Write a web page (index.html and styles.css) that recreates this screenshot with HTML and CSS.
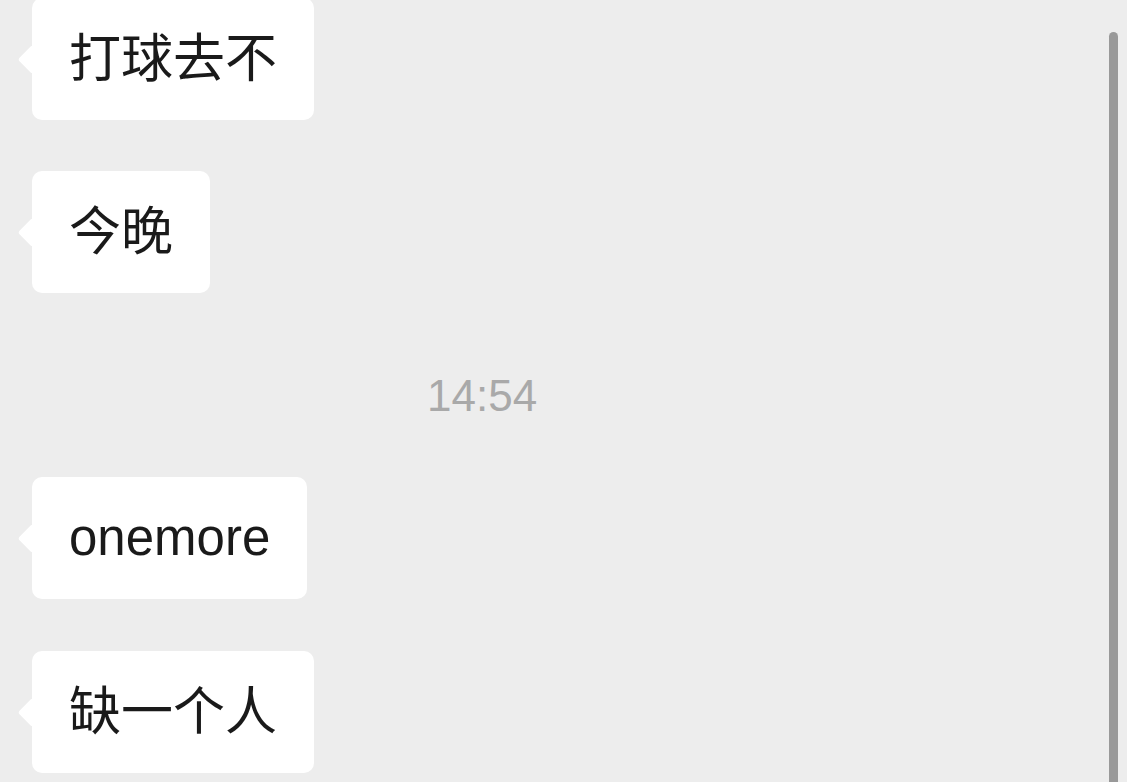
FILE: index.html
```html
<!DOCTYPE html>
<html lang="zh-CN">
<head>
  <meta charset="UTF-8">
  <meta name="viewport" content="width=device-width, initial-scale=1.0">
  <title>聊天</title>
  <link rel="stylesheet" href="styles.css">
</head>
<body>
  <div class="chat">
    <!-- 消息列表 -->
    <div class="row"><div class="bubble">打球去不</div></div>
    <div class="row"><div class="bubble">今晚</div></div>
    <div class="time">14:54</div>
    <div class="row row-wide"><div class="bubble latin">onemore</div></div>
    <div class="row"><div class="bubble">缺一个人</div></div>
  </div>
  <!-- 滚动条 -->
  <div class="scrollbar"></div>
</body>
</html>
```

FILE: styles.css
```css
* { box-sizing: border-box; }
html, body {
  height: 782px;
  overflow: hidden;
}
body {
  margin: 0;
  padding: 0;
  background-color: #ededed;
  font-family: 'Liberation Sans', 'Noto Sans CJK SC', sans-serif;
  color: #1a1a1a;
}
.chat {
  display: flex;
  flex-direction: column;
  padding-left: 32px;
  margin-top: -2px;
}
.row {
  display: flex;
  margin-bottom: 51px;
}
.row-wide {
  margin-bottom: 52px;
}
.bubble {
  position: relative;
  background-color: #fff;
  border-radius: 10px;
  padding: 30px 37px;
  font-size: 52px;
  line-height: 62px;
  white-space: nowrap;
}
.bubble.latin {
  font-size: 51px;
}
/* 气泡左侧的小三角 */
.bubble::before {
  content: "";
  position: absolute;
  left: -10.5px;
  top: 50%;
  width: 21px;
  height: 21px;
  margin-top: -10.5px;
  background-color: #fff;
  border-radius: 3px;
  transform: rotate(45deg);
}
.time {
  margin: 26px 0 55px 0;
  padding-left: 395px;
  font-size: 44px;
  line-height: 52px;
  color: #a9a9a9;
}
.scrollbar {
  position: absolute;
  top: 32px;
  left: 1109px;
  width: 9px;
  height: 800px;
  border-radius: 5px;
  background-color: #999;
}
```
